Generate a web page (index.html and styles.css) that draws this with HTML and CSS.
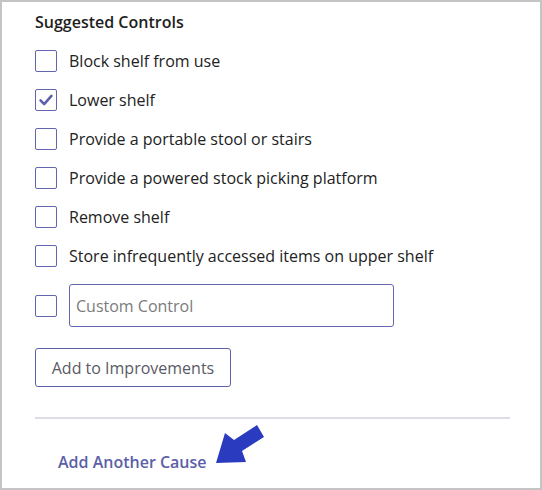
FILE: index.html
```html
<!DOCTYPE html>
<html>
<head>
<meta charset="utf-8">
<link rel="stylesheet" href="styles.css">
</head>
<body>
<div class="panel">
  <h2 class="title">Suggested Controls</h2>
  <ul class="list">
    <li class="row"><span class="box"></span><span class="label">Block shelf from use</span></li>
    <li class="row"><span class="box checked"><svg viewBox="0 0 22 22" width="22" height="22"><path d="M5 11.5 L9 15.5 L17 6.5" fill="none" stroke="#5d60a8" stroke-width="2.8" stroke-linecap="round" stroke-linejoin="round"/></svg></span><span class="label">Lower shelf</span></li>
    <li class="row"><span class="box"></span><span class="label">Provide a portable stool or stairs</span></li>
    <li class="row"><span class="box"></span><span class="label">Provide a powered stock picking platform</span></li>
    <li class="row"><span class="box"></span><span class="label">Remove shelf</span></li>
    <li class="row"><span class="box"></span><span class="label">Store infrequently accessed items on upper shelf</span></li>
    <li class="row custom"><span class="box"></span><input class="input" type="text" placeholder="Custom Control"></li>
  </ul>
  <button class="btn">Add to Improvements</button>
  <hr class="divider">
  <div class="footer">
    <a class="link" href="#">Add Another Cause</a>
    <svg class="arrow" width="60" height="50" viewBox="210 420 60 50"><polygon points="216,463 225,433 234,440 257,425 264,437 242,451 246,462" fill="#2a3bbf"/></svg>
  </div>
</div>
</body>
</html>
```
FILE: styles.css
```css
html, body { margin: 0; padding: 0; background: #fff; }
body { font-family: "Open Sans", "Noto Sans", sans-serif; color: #222; }
.panel {
  width: 542px; height: 490px; box-sizing: border-box;
  border: 2px solid #c4c4c4;
  padding: 9px 30px 0 33px;
  position: relative;
}
.title { margin: 0; font-size: 16px; font-weight: 600; line-height: 22px; color: #1e1e1e; }
.list { list-style: none; margin: 17px 0 0; padding: 0; display: flex; flex-direction: column; gap: 17px; }
.row { display: flex; align-items: center; height: 22px; }
.row.custom { height: 43px; }
.box {
  width: 22px; height: 22px; box-sizing: border-box; flex: none;
  border: 1px solid #6266b0; border-radius: 2px; background: #fff;
  display: flex; align-items: center; justify-content: center;
}
.box svg { display: block; }
.label { margin-left: 12px; font-size: 16px; line-height: 22px; color: #222; }
.input {
  margin-left: 12px; width: 325px; height: 43px; box-sizing: border-box;
  border: 1px solid #6266b0; border-radius: 3px; padding: 0 6px;
  font-family: inherit; font-size: 16px; color: #222; outline: none;
}
.input::placeholder { color: #7b7b7b; }
.btn {
  display: block; margin-top: 21px; width: 196px; height: 39px; box-sizing: border-box;
  border: 1px solid #5e62aa; border-radius: 3px; background: #fff;
  font-family: inherit; font-size: 16px; color: #5a5a66; padding: 0;
}
.divider { margin: 30px 0 0; border: 0; height: 2px; background: #dddce8; }
.footer { position: relative; padding: 32px 0 0 23px; line-height: 22px; }
.link { font-size: 16px; font-weight: 600; color: #5c5fa8; text-decoration: none; line-height: 22px; }
.arrow { position: absolute; left: 175px; top: 1px; }
```
